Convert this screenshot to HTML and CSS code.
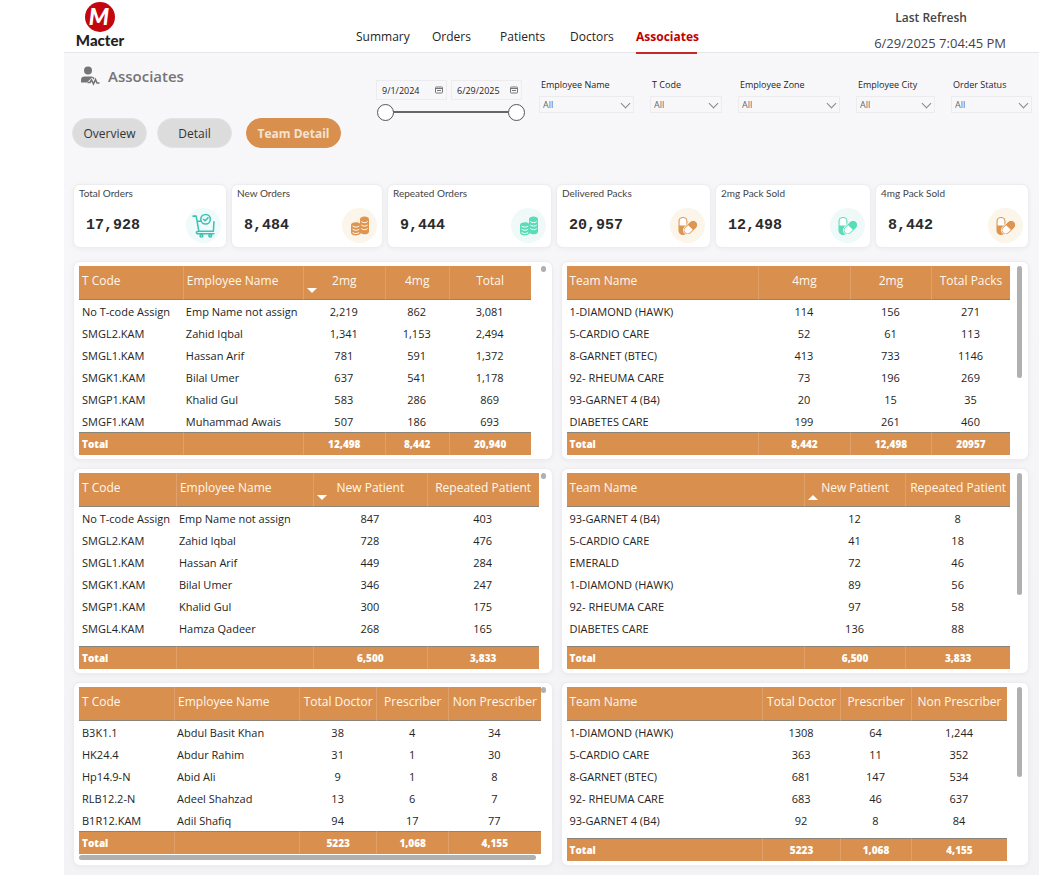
FILE: index.html
```
<!DOCTYPE html>
<html lang="en">
<head>
  <meta charset="UTF-8">
  <meta name="viewport" content="width=device-width, initial-scale=1.0">
  <title>Macter - Associates</title>
  <link rel="stylesheet" href="styles.css">
</head>
<body>
  <!-- shared icons -->
  <svg width="0" height="0" class="sprite">
    <symbol id="cart" viewBox="0 0 24 24">
      <g fill="none" stroke="currentColor" stroke-width="1.5" stroke-linecap="round" stroke-linejoin="round">
        <path d="M2 3h3l2.500 14.500h14l.5-9M7.500 17.500c-3 0-3 2.500-.5 2.500h15M6 8h3.500"/>
        <circle cx="14" cy="6" r="4.600"/><path d="M12 6l1.500 1.500 2.800-2.800"/>
        <circle cx="10" cy="21.800" r="1.300"/><circle cx="18.500" cy="21.800" r="1.300"/>
      </g>
    </symbol>
    <symbol id="coins" viewBox="0 0 20 20">
      <path fill="currentColor" d="M10 3c0-3.500 9-3.500 9 0v12.500c0 3.500-7 3.500-8 1.500-1.500 3.300-10 3.300-10-.5V9c0-3 6.500-3.800 9-1.500z"/>
      <path fill="none" stroke="#fff" stroke-width="1" d="M11.300 5.500c1.700 1.500 4.700 1.500 6.400 0M11.300 9c1.700 1.500 4.700 1.500 6.400 0M11.300 12.500c1.700 1.500 4.700 1.500 6.400 0M2.500 10c1.700 1.500 5 1.500 6.700 0M2.500 13.200c1.700 1.500 5 1.500 6.700 0M2.500 16.400c1.700 1.500 5 1.500 6.700 0"/>
    </symbol>
    <symbol id="pills" viewBox="0 0 20 20">
      <rect x=".5" y="1" width="9" height="18" rx="4.500" fill="currentColor"/>
      <path fill="#fff" d="M1.600 9.500v-4a3.400 3.400 0 0 1 6.800 0v4z"/>
      <g transform="rotate(45 12.500 11.500)">
        <rect x="8" y="3.300" width="9" height="16.400" rx="4.500" fill="currentColor" stroke="#fff" stroke-width=".8"/>
        <path fill="#fff" d="M9.200 11.500h6.600v3.800a3.300 3.300 0 0 1-6.600 0z"/>
      </g>
    </symbol>
    <symbol id="calendar" viewBox="0 0 8 8">
      <rect x=".5" y="1" width="7" height="6" rx=".7" fill="none" stroke="currentColor"/>
      <path d="M1 2.500h6M2 4.500h4" stroke="currentColor"/>
    </symbol>
  </svg>

  <div class="report">
    <header class="topbar">
      <a href="#" class="logo">
        <svg width="32" height="32" viewBox="0 0 32 32">
          <circle cx="16" cy="16" r="15" fill="#c4060f"/>
          <text x="15" y="24" class="logo-mark">M</text>
        </svg>
        <span>Macter</span>
      </a>
      <nav class="nav">
        <a href="#">Summary</a>
        <a href="#">Orders</a>
        <a href="#">Patients</a>
        <a href="#">Doctors</a>
        <a href="#" class="active">Associates</a>
      </nav>
      <div class="refresh">
        <strong>Last Refresh</strong>
        <span>6/29/2025 7:04:45 PM</span>
      </div>
    </header>

    <section class="toolbar">
      <div class="heading">
        <h1>
          <svg width="20" height="20" viewBox="0 0 20 20">
            <circle cx="8" cy="4.500" r="4" fill="#757575"/>
            <path fill="#757575" d="M1 16.500v-2.500c0-2.700 1.500-3.500 3.500-3.500h7c1.500 0 2.500.7 3 2l-1 1-1.500-2-3.500 3.500-1.500 1.500z"/>
            <path fill="none" stroke="#757575" stroke-width="1.600" d="M7.500 16.500h2.500l1.500-2.500 2 4 2-4.500 1.500 3.500h2.500"/>
          </svg>
          Associates
        </h1>
        <div class="tabs">
          <button type="button">Overview</button>
          <button type="button">Detail</button>
          <button type="button" class="active">Team Detail</button>
        </div>
      </div>

      <div class="dates">
        <div class="date-boxes">
          <div class="date-box"><input type="text" value="9/1/2024" aria-label="Start date"><svg width="8" height="8"><use href="#calendar"/></svg></div>
          <div class="date-box"><input type="text" value="6/29/2025" aria-label="End date"><svg width="8" height="8"><use href="#calendar"/></svg></div>
        </div>
        <div class="slider">
          <input type="range" min="0" max="100" value="0" aria-label="Range start">
          <input type="range" min="0" max="100" value="100" aria-label="Range end">
        </div>
      </div>

      <div class="filters">
        <div class="filter"><label for="fName">Employee Name</label><div class="select"><select id="fName"><option>All</option></select></div></div>
        <div class="filter"><label for="fCode">T Code</label><div class="select"><select id="fCode"><option>All</option></select></div></div>
        <div class="filter"><label for="fZone">Employee Zone</label><div class="select"><select id="fZone"><option>All</option></select></div></div>
        <div class="filter"><label for="fCity">Employee City</label><div class="select"><select id="fCity"><option>All</option></select></div></div>
        <div class="filter"><label for="fStatus">Order Status</label><div class="select"><select id="fStatus"><option>All</option></select></div></div>
      </div>
    </section>

    <section class="kpis">
      <div class="kpi"><h2>Total Orders</h2><div class="kpi-row"><span>17,928</span><i class="badge teal"><svg class="cart"><use href="#cart"/></svg></i></div></div>
      <div class="kpi"><h2>New Orders</h2><div class="kpi-row"><span>8,484</span><i class="badge orange"><svg><use href="#coins"/></svg></i></div></div>
      <div class="kpi"><h2>Repeated Orders</h2><div class="kpi-row"><span>9,444</span><i class="badge green"><svg><use href="#coins"/></svg></i></div></div>
      <div class="kpi"><h2>Delivered Packs</h2><div class="kpi-row"><span>20,957</span><i class="badge orange"><svg><use href="#pills"/></svg></i></div></div>
      <div class="kpi"><h2>2mg Pack Sold</h2><div class="kpi-row"><span>12,498</span><i class="badge green"><svg><use href="#pills"/></svg></i></div></div>
      <div class="kpi"><h2>4mg Pack Sold</h2><div class="kpi-row"><span>8,442</span><i class="badge orange"><svg><use href="#pills"/></svg></i></div></div>
    </section>

    <main class="tables">
      <div class="card gap-wide">
        <table>
          <colgroup><col style="width:23%"><col style="width:26.600%"><col style="width:18.100%"><col style="width:14.200%"><col style="width:18.100%"></colgroup>
          <thead><tr><th class="txt">T Code</th><th class="txt">Employee Name</th><th class="sort-desc">2mg</th><th>4mg</th><th>Total</th></tr></thead>
          <tbody>
            <tr><td class="txt">No T-code Assign</td><td class="txt">Emp Name not assign</td><td>2,219</td><td>862</td><td>3,081</td></tr>
            <tr><td class="txt">SMGL2.KAM</td><td class="txt">Zahid Iqbal</td><td>1,341</td><td>1,153</td><td>2,494</td></tr>
            <tr><td class="txt">SMGL1.KAM</td><td class="txt">Hassan Arif</td><td>781</td><td>591</td><td>1,372</td></tr>
            <tr><td class="txt">SMGK1.KAM</td><td class="txt">Bilal Umer</td><td>637</td><td>541</td><td>1,178</td></tr>
            <tr><td class="txt">SMGP1.KAM</td><td class="txt">Khalid Gul</td><td>583</td><td>286</td><td>869</td></tr>
            <tr><td class="txt">SMGF1.KAM</td><td class="txt">Muhammad Awais</td><td>507</td><td>186</td><td>693</td></tr>
          </tbody>
          <tfoot><tr><td class="txt">Total</td><td></td><td>12,498</td><td>8,442</td><td>20,940</td></tr></tfoot>
        </table>
        <div class="thumb dot"></div>
      </div>

      <div class="card gap-team">
        <table>
          <colgroup><col style="width:43.200%"><col style="width:20.700%"><col style="width:18.300%"><col style="width:17.800%"></colgroup>
          <thead><tr><th class="txt">Team Name</th><th>4mg</th><th>2mg</th><th>Total Packs</th></tr></thead>
          <tbody>
            <tr><td class="txt">1-DIAMOND (HAWK)</td><td>114</td><td>156</td><td>271</td></tr>
            <tr><td class="txt">5-CARDIO CARE</td><td>52</td><td>61</td><td>113</td></tr>
            <tr><td class="txt">8-GARNET (BTEC)</td><td>413</td><td>733</td><td>1146</td></tr>
            <tr><td class="txt">92- RHEUMA CARE</td><td>73</td><td>196</td><td>269</td></tr>
            <tr><td class="txt">93-GARNET 4 (B4)</td><td>20</td><td>15</td><td>35</td></tr>
            <tr><td class="txt">DIABETES CARE</td><td>199</td><td>261</td><td>460</td></tr>
          </tbody>
          <tfoot><tr><td class="txt">Total</td><td>8,442</td><td>12,498</td><td>20957</td></tr></tfoot>
        </table>
        <div class="thumb" style="height:59%"></div>
      </div>

      <div class="card gap-narrow spaced">
        <table>
          <colgroup><col style="width:21.100%"><col style="width:29.800%"><col style="width:24.800%"><col style="width:24.300%"></colgroup>
          <thead><tr><th class="txt">T Code</th><th class="txt">Employee Name</th><th class="sort-desc">New Patient</th><th>Repeated Patient</th></tr></thead>
          <tbody>
            <tr><td class="txt">No T-code Assign</td><td class="txt">Emp Name not assign</td><td>847</td><td>403</td></tr>
            <tr><td class="txt">SMGL2.KAM</td><td class="txt">Zahid Iqbal</td><td>728</td><td>476</td></tr>
            <tr><td class="txt">SMGL1.KAM</td><td class="txt">Hassan Arif</td><td>449</td><td>284</td></tr>
            <tr><td class="txt">SMGK1.KAM</td><td class="txt">Bilal Umer</td><td>346</td><td>247</td></tr>
            <tr><td class="txt">SMGP1.KAM</td><td class="txt">Khalid Gul</td><td>300</td><td>175</td></tr>
            <tr><td class="txt">SMGL4.KAM</td><td class="txt">Hamza Qadeer</td><td>268</td><td>165</td></tr>
          </tbody>
          <tfoot><tr><td class="txt">Total</td><td></td><td>6,500</td><td>3,833</td></tr></tfoot>
        </table>
        <div class="thumb dot"></div>
      </div>

      <div class="card gap-team spaced">
        <table>
          <colgroup><col style="width:53.500%"><col style="width:22.900%"><col style="width:23.600%"></colgroup>
          <thead><tr><th class="txt">Team Name</th><th class="sort-asc">New Patient</th><th>Repeated Patient</th></tr></thead>
          <tbody>
            <tr><td class="txt">93-GARNET 4 (B4)</td><td>12</td><td>8</td></tr>
            <tr><td class="txt">5-CARDIO CARE</td><td>41</td><td>18</td></tr>
            <tr><td class="txt">EMERALD</td><td>72</td><td>46</td></tr>
            <tr><td class="txt">1-DIAMOND (HAWK)</td><td>89</td><td>56</td></tr>
            <tr><td class="txt">92- RHEUMA CARE</td><td>97</td><td>58</td></tr>
            <tr><td class="txt">DIABETES CARE</td><td>136</td><td>88</td></tr>
          </tbody>
          <tfoot><tr><td class="txt">Total</td><td>6,500</td><td>3,833</td></tr></tfoot>
        </table>
        <div class="thumb" style="height:62%"></div>
      </div>

      <div class="card gap-none">
        <table>
          <colgroup><col style="width:20.600%"><col style="width:27.100%"><col style="width:16.700%"><col style="width:15.600%"><col style="width:20%"></colgroup>
          <thead><tr><th class="txt">T Code</th><th class="txt">Employee Name</th><th>Total Doctor</th><th>Prescriber</th><th>Non Prescriber</th></tr></thead>
          <tbody>
            <tr><td class="txt">B3K1.1</td><td class="txt">Abdul Basit Khan</td><td>38</td><td>4</td><td>34</td></tr>
            <tr><td class="txt">HK24.4</td><td class="txt">Abdur Rahim</td><td>31</td><td>1</td><td>30</td></tr>
            <tr><td class="txt">Hp14.9-N</td><td class="txt">Abid Ali</td><td>9</td><td>1</td><td>8</td></tr>
            <tr><td class="txt">RLB12.2-N</td><td class="txt">Adeel Shahzad</td><td>13</td><td>6</td><td>7</td></tr>
            <tr><td class="txt">B1R12.KAM</td><td class="txt">Adil Shafiq</td><td>94</td><td>17</td><td>77</td></tr>
          </tbody>
          <tfoot><tr><td class="txt">Total</td><td></td><td>5223</td><td>1,068</td><td>4,155</td></tr></tfoot>
        </table>
        <div class="thumb dot"></div>
        <div class="thumb-x"></div>
      </div>

      <div class="card gap-wide spaced">
        <table>
          <colgroup><col style="width:44.400%"><col style="width:17.700%"><col style="width:16.100%"><col style="width:21.800%"></colgroup>
          <thead><tr><th class="txt">Team Name</th><th>Total Doctor</th><th>Prescriber</th><th>Non Prescriber</th></tr></thead>
          <tbody>
            <tr><td class="txt">1-DIAMOND (HAWK)</td><td>1308</td><td>64</td><td>1,244</td></tr>
            <tr><td class="txt">5-CARDIO CARE</td><td>363</td><td>11</td><td>352</td></tr>
            <tr><td class="txt">8-GARNET (BTEC)</td><td>681</td><td>147</td><td>534</td></tr>
            <tr><td class="txt">92- RHEUMA CARE</td><td>683</td><td>46</td><td>637</td></tr>
            <tr><td class="txt">93-GARNET 4 (B4)</td><td>92</td><td>8</td><td>84</td></tr>
          </tbody>
          <tfoot><tr><td class="txt">Total</td><td>5223</td><td>1,068</td><td>4,155</td></tr></tfoot>
        </table>
        <div class="thumb" style="height:52%"></div>
      </div>
    </main>
  </div>
</body>
</html>
```
FILE: styles.css
```
* {
  box-sizing: border-box;
}
body {
  margin: 0;
  background: #fff;
  color: #252423;
  font-family: "Open Sans", "Noto Sans", sans-serif;
  font-size: 11px;
}
a {
  color: inherit;
  text-decoration: none;
}
button, input, select {
  font-family: inherit;
}
.sprite {
  position: absolute;
}
.report {
  margin: 0 9px 0 64px;
  background: linear-gradient(#f8f8fb, #f3f3f5);
  padding-bottom: 9px;
}

/* top bar */
.topbar {
  display: flex;
  height: 53px;
  background: #fff;
  border-bottom: 1px solid #e6e6e8;
}
.logo {
  display: flex;
  flex-direction: column;
  align-items: center;
  width: 72px;
  padding-top: 1px;
  font-family: Lato, sans-serif;
  font-size: 15px;
  font-weight: 900;
  line-height: 15px;
  color: #222;
}
.logo-mark {
  font-family: Lato, sans-serif;
  font-size: 23px;
  font-weight: 900;
  font-style: italic;
  fill: #fff;
  text-anchor: middle;
}
.nav {
  flex: 1;
  display: grid;
  grid-template-columns: 76px 68px 70px 66px 61px;
  margin-left: 220px;
  font-size: 12px;
}
.nav a {
  height: 54px;
  padding-top: 28px;
  line-height: 18px;
}
.nav .active {
  color: #c00000;
  font-weight: 700;
  border-bottom: 2px solid #c62828;
}
.refresh {
  display: flex;
  flex-direction: column;
  align-items: center;
  padding: 8px 33px 0 0;
  color: #444;
}
.refresh strong {
  font-size: 12px;
  font-weight: 600;
  line-height: 20px;
  padding-right: 18px;
}
.refresh span {
  font-size: 13px;
  line-height: 20px;
  margin-top: 5px;
}

/* title, date range and filters */
.toolbar {
  display: flex;
  height: 131px;
  padding: 0 7px 0 8px;
}
.heading {
  width: 304px;
}
.heading h1 {
  display: flex;
  align-items: center;
  gap: 8px;
  margin: 12px 0 31px 8px;
  font-size: 15px;
  font-weight: 600;
  line-height: 22px;
  color: #757575;
}
.tabs {
  display: flex;
  align-items: center;
  gap: 10px;
}
.tabs button {
  width: 75px;
  height: 30px;
  padding: 0;
  border: 1px solid #e4e4e4;
  border-radius: 15px;
  background: #dcdcdc;
  color: #333;
  font-size: 12px;
}
.tabs .active {
  width: 95px;
  margin-left: 4px;
  border-color: #d98f4d;
  background: #d98f4d;
  color: #f3e3d3;
  font-weight: 700;
}
.dates {
  width: 146px;
  padding-top: 27px;
}
.date-boxes {
  display: flex;
  gap: 4px;
}
.date-box {
  flex: 1;
  display: flex;
  align-items: center;
  min-width: 0;
  height: 20px;
  padding: 0 3px 0 5px;
  border: 1px solid #ececee;
  color: #777;
}
.date-box input {
  flex: 1;
  min-width: 0;
  padding: 0;
  border: 0;
  background: none;
  font-size: 9px;
  color: #252423;
}
.date-box svg {
  flex-shrink: 0;
}
.slider {
  position: relative;
  height: 18px;
  margin: 3px -3px 0 1px;
}
.slider::before {
  content: "";
  position: absolute;
  left: 8px;
  right: 8px;
  top: 8px;
  height: 2px;
  background: #666;
}
.slider input {
  position: absolute;
  left: 0;
  top: 0;
  width: 100%;
  height: 18px;
  margin: 0;
  background: none;
  appearance: none;
  pointer-events: none;
}
.slider input::-webkit-slider-thumb {
  appearance: none;
  width: 17px;
  height: 17px;
  border: 1px solid #555;
  border-radius: 50%;
  background: #fff;
  pointer-events: auto;
}
.filters {
  flex: 1;
  display: grid;
  grid-template-columns: 111fr 88fr 118fr 95fr 81fr;
  margin-left: 17px;
  padding-top: 24px;
}
.filter {
  padding-right: 16px;
}
.filter:last-child {
  padding-right: 0;
}
.filter label {
  display: block;
  padding-left: 2px;
  font-size: 9px;
  line-height: 16px;
  white-space: nowrap;
}
.select {
  position: relative;
  margin-top: 3px;
}
.select::after {
  content: "";
  position: absolute;
  right: 5px;
  top: 4px;
  width: 6px;
  height: 6px;
  border: solid #888;
  border-width: 0 1px 1px 0;
  transform: rotate(45deg);
  pointer-events: none;
}
.select select {
  width: 100%;
  height: 17px;
  padding: 0 3px;
  border: 1px solid #ececee;
  background: none;
  color: #666;
  font-size: 9px;
  appearance: none;
}

/* kpi cards */
.kpis {
  display: grid;
  grid-template-columns: 154fr 152fr 165fr 155fr 156fr 154fr;
  gap: 4px;
  padding: 0 10px 0 9px;
}
.kpi, .card {
  border: 1px solid #ededf0;
  border-radius: 7px;
  background: #fff;
  box-shadow: 0 1px 5px rgba(0, 0, 0, 0.05);
}
.kpi {
  height: 64px;
}
.kpi h2 {
  margin: 0;
  padding: 1px 0 0 5px;
  font-family: Lato, sans-serif;
  font-size: 10px;
  font-weight: 400;
  line-height: 14px;
  color: #444;
}
.kpi-row {
  display: flex;
  align-items: center;
  justify-content: space-between;
  padding: 8px 5px 0 12px;
  font-family: "Liberation Mono", monospace;
  font-size: 15px;
  font-weight: 700;
  color: #2b2b2b;
}
.badge {
  display: flex;
  align-items: center;
  justify-content: center;
  width: 35px;
  height: 35px;
  border-radius: 50%;
}
.badge svg {
  width: 20px;
  height: 20px;
}
.badge .cart {
  width: 25px;
  height: 25px;
}
.teal {
  background: #effbfa;
  color: #3fc1b5;
}
.green {
  background: #effaf8;
  color: #5bdcb8;
}
.orange {
  background: #fbf5ea;
  color: #dd9550;
}

/* tables */
.tables {
  display: grid;
  grid-template-columns: 479fr 468fr;
  gap: 8px;
  padding: 13px 10px 0 9px;
}
.card {
  display: grid;
  grid-template-columns: 1fr 6px;
  align-content: start;
  padding: 4px 5px;
}
.gap-wide {
  column-gap: 10px;
}
.gap-team {
  column-gap: 7px;
}
.gap-narrow {
  column-gap: 2px;
}
table {
  width: 100%;
  table-layout: fixed;
  border-collapse: separate;
  border-spacing: 0;
}
th {
  position: relative;
  height: 34px;
  padding: 0 0 5px;
  border-bottom: 1px solid #8a8578;
  background: #d98f4d;
  color: #fff8ee;
  font-size: 12px;
  font-weight: 500;
  white-space: nowrap;
}
td {
  padding: 2px 0 0;
  line-height: 20px;
  text-align: center;
  white-space: nowrap;
}
.txt {
  padding-left: 3px;
  text-align: left;
}
.spaced tbody tr:last-child td {
  padding-bottom: 7px;
}
tfoot td {
  padding-top: 0;
  border-top: 1px solid #8a8578;
  background: #d98f4d;
  color: #fff;
  font-size: 10px;
  font-weight: 800;
  line-height: 22px;
}
th + th, tfoot td + td {
  border-left: 1px solid #e0a06a;
}
.sort-desc::after, .sort-asc::after {
  content: "";
  position: absolute;
  left: 3px;
  bottom: 6px;
  border: 5px solid transparent;
  border-bottom-width: 0;
  border-top-color: #fff;
}
.sort-asc::after {
  border-width: 0 5px 5px;
  border-color: transparent transparent #fff;
}
.thumb {
  width: 5px;
  border-radius: 3px;
  background: #b0b0b0;
}
.thumb.dot {
  height: 6px;
}
.thumb-x {
  width: 99%;
  height: 5px;
  margin-top: 1px;
  border-radius: 3px;
  background: #b0b0b0;
}
```
